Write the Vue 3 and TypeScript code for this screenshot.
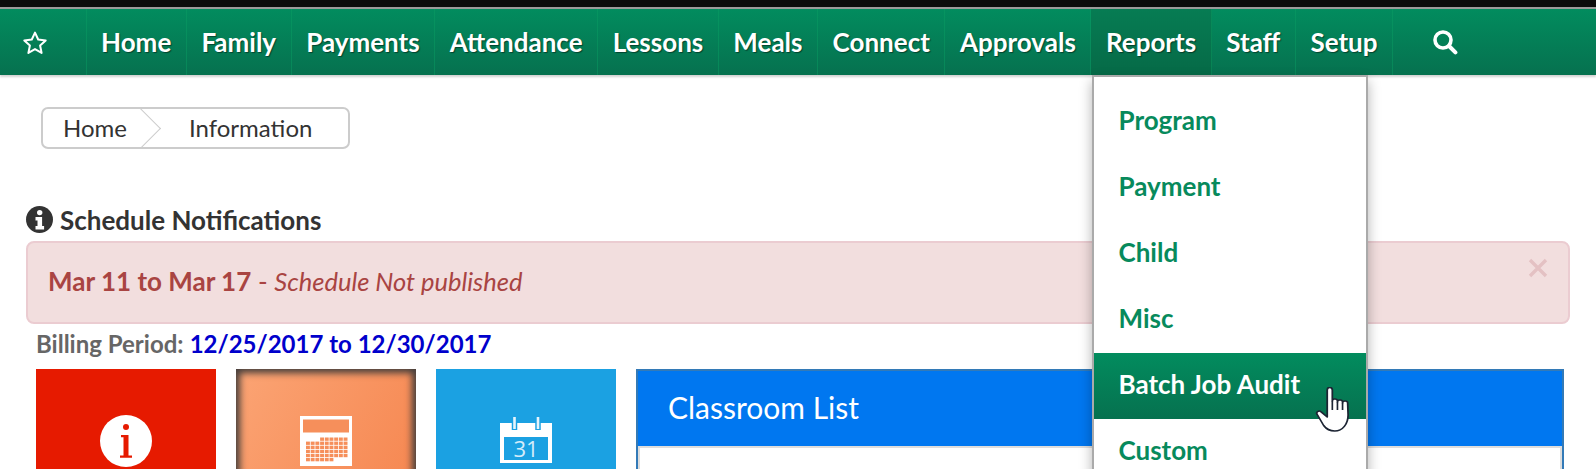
<script setup lang="ts">
const navItems: string[] = ['Home', 'Family', 'Payments', 'Attendance', 'Lessons', 'Meals', 'Connect', 'Approvals', 'Reports', 'Staff', 'Setup']
const menuItems: string[] = ['Program', 'Payment', 'Child', 'Misc', 'Batch Job Audit', 'Custom']
const gridCells: { x: number; y: number }[] = []
for (let r = 0; r < 6; r++) {
  for (let c = 0; c < 9; c++) {
    if ((r < 1 && c < 3) || (r > 4 && c > 5)) continue
    gridCells.push({ x: 6 + c * 4.7, y: 21.5 + r * 4.1 })
  }
}
</script>

<template>
  <div class="page">
    <div class="topbar"></div>
    <nav class="nav">
      <a class="nav-item star-item">
        <svg width="26" height="25" viewBox="0 0 26 25"><path d="M13 2.600l3.200 6.900 7.500.9-5.600 5.100 1.500 7.400L13 19.100l-6.600 3.800 1.500-7.400-5.600-5.100 7.500-.9z" fill="none" stroke="#fff" stroke-width="2" stroke-linejoin="round"/></svg>
      </a>
      <a v-for="item in navItems" :key="item" class="nav-item" :class="{ active: item === 'Reports' }">{{ item }}</a>
      <a class="nav-item search-item">
        <svg width="26" height="26" viewBox="0 0 26 26"><circle cx="11" cy="11" r="8" fill="none" stroke="#fff" stroke-width="3.600"/><path d="M17 17l6.400 6.400" stroke="#fff" stroke-width="4" stroke-linecap="round"/></svg>
      </a>
    </nav>

    <main class="content">
      <div class="crumbs">
        <span class="crumb first">Home<i class="chevron"></i></span>
        <span class="crumb second">Information</span>
      </div>

      <h4 class="section-title">
        <svg width="27" height="27" viewBox="0 0 27 27"><circle cx="13.500" cy="13.500" r="13.500" fill="#333"/><circle cx="13.700" cy="6.600" r="2.700" fill="#fff"/><path d="M9.500 11h6.600v9h2v3.400H9.500V20h2v-5.600h-2z" fill="#fff"/></svg>
        <span>Schedule Notifications</span>
      </h4>

      <div class="alert">
        <span><b>Mar 11 to Mar 17</b> - <em>Schedule Not published</em></span>
        <svg class="close" width="20" height="20" viewBox="0 0 20 20"><path d="M2 2l16 16M18 2L2 18" stroke="#e4c1c3" stroke-width="3.400"/></svg>
      </div>

      <div class="billing"><b>Billing Period:</b> <b class="dates">12/25/2017 to 12/30/2017</b></div>

      <div class="dash">
        <div class="tile red">
          <svg width="52" height="52" viewBox="0 0 52 52"><circle cx="26" cy="26" r="26" fill="#fff"/><circle cx="26" cy="12" r="3" fill="#e61a00"/><path d="M21 20h7.500v20.500h3.500v2.200H20v-2.200h3.500V22.200H21z" fill="#e61a00"/></svg>
        </div>
        <div class="tile orange">
          <svg width="52" height="50" viewBox="0 0 52 50">
            <rect width="52" height="50" fill="#fff"/>
            <rect x="3" y="3.500" width="46" height="13" fill="#f68f5b"/>
            <rect v-for="(c, i) in gridCells" :key="i" :x="c.x" :y="c.y" width="3.900" height="3.300" fill="#f68f5b"/>
          </svg>
        </div>
        <div class="tile blue">
          <svg width="52" height="46" viewBox="0 0 52 46">
            <path d="M0 6h52v40H0z" fill="#fff"/>
            <rect x="4" y="20" width="44" height="23" fill="#1ba1e2"/>
            <path d="M14.500 0v13M38 0v13" stroke="#1ba1e2" stroke-width="5.500"/>
            <path d="M14.500 0v12M38 0v12" stroke="#e6f4fc" stroke-width="2.600"/>
            <text x="26" y="40" text-anchor="middle" class="cal-num">31</text>
          </svg>
        </div>
        <section class="panel">
          <header class="panel-head">Classroom List</header>
          <div class="panel-body"></div>
        </section>
      </div>
    </main>

    <ul class="menu">
      <li v-for="m in menuItems" :key="m" :class="{ hover: m === 'Batch Job Audit' }">{{ m }}</li>
    </ul>

    <svg class="cursor" width="40" height="46" viewBox="0 0 36 46" preserveAspectRatio="none">
      <path d="M11 3c0-3.500 4.600-3.500 4.600 0V14c0-2.600 4.600-2.600 4.600 0v1c0-2.600 4.600-2.600 4.600 0v1c0-2.600 4.600-2.600 4.600 0l.4 12c0 9-5 16-12 16-5 0-8-2.500-10-5.500L2 27.500c-1.600-2.500 1.500-4.500 3.500-2.700L11 30z" fill="#fff" stroke="#1c2433" stroke-width="1.600" stroke-linejoin="round"/>
      <path d="M15.600 14v9M20.200 15v8M24.800 16v7" stroke="#1c2433" stroke-width="1.500" fill="none"/>
    </svg>
  </div>
</template>

<style scoped>
.page {
  position: relative;
  width: 1596px;
  height: 469px;
  overflow: hidden;
  background: #fff;
  font-family: Lato, "Open Sans", sans-serif;
  color: #333;
}
.topbar {
  height: 7px;
  background: #0b0b0b;
  border-bottom: 2px solid #9c9a9a;
}
.nav {
  display: flex;
  height: 66px;
  background: linear-gradient(#028c5e, #06714f);
  box-shadow: 0 2px 2px rgba(0, 0, 0, 0.18);
  position: relative;
}
.nav-item {
  display: flex;
  align-items: center;
  padding: 0 14.550px;
  color: #fff;
  font-size: 26px;
  font-weight: 700;
  text-shadow: 1px 1px 1px rgba(0, 0, 0, 0.45);
  border-right: 1px solid rgba(10, 160, 100, 0.45);
  white-space: nowrap;
}
.star-item {
  width: 86.500px;
  box-sizing: border-box;
  padding: 0 0 0 22px;
}
.search-item {
  border-right: 0;
  padding: 0 0 0 38.500px;
}
.active {
  background: linear-gradient(#067c53, #066a47);
}
.content {
  padding: 32px 26px 0;
}
.crumbs {
  display: flex;
  width: 309px;
  height: 42px;
  box-sizing: border-box;
  margin-left: 15px;
  border: 2px solid #ccc;
  border-radius: 7px;
  font-size: 24px;
  line-height: 38px;
  color: #333;
}
.crumb {
  position: relative;
}
.first {
  width: 97px;
  padding-left: 20px;
  box-sizing: border-box;
}
.chevron {
  position: absolute;
  top: 4.500px;
  right: -14.500px;
  width: 29px;
  height: 29px;
  border-top: 1px solid #ccc;
  border-right: 1px solid #ccc;
  transform: rotate(45deg);
  box-sizing: border-box;
}
.second {
  padding-left: 49px;
}
.section-title {
  display: flex;
  align-items: center;
  gap: 7px;
  margin: 57px 0 0;
  height: 27px;
  font-size: 26px;
  font-weight: 700;
  color: #333;
}
.alert {
  display: flex;
  justify-content: space-between;
  box-sizing: border-box;
  height: 83px;
  margin-top: 8px;
  padding: 14px 20px;
  background: #f2dede;
  border: 2px solid #ebccd1;
  border-radius: 8px;
  color: #a94442;
  font-size: 26px;
  line-height: 48px;
}
.alert em {
  font-size: 25.500px;
}
.alert .close {
  margin-top: 1px;
}
.billing {
  margin: 6px 0 0 10px;
  height: 28px;
  line-height: 28px;
  font-size: 24px;
  color: #666;
}
.dates {
  color: #0000cc;
}
.dash {
  display: flex;
  gap: 20px;
  margin: 11px 6px 0 10px;
}
.tile {
  flex: 0 0 180px;
  height: 180px;
  box-sizing: border-box;
  padding-top: 46px;
  display: flex;
  justify-content: center;
  align-items: flex-start;
}
.red {
  background: #e61a00;
}
.orange {
  background: linear-gradient(120deg, #fba474, #f5834c);
  box-shadow: inset 0 0 7px 4px #453f3c;
  padding-top: 47px;
}
.blue {
  background: #1ba1e2;
  padding-top: 48px;
}
.cal-num {
  font-family: "Open Sans", sans-serif;
  font-size: 22px;
  fill: #d5ecfa;
}
.panel {
  flex: 1;
  box-sizing: border-box;
  border: 2px solid #337ab7;
  height: 200px;
}
.panel-head {
  height: 75px;
  box-sizing: border-box;
  padding: 0 30px;
  background: #0077f0;
  color: #fff;
  font-size: 30px;
  line-height: 72px;
}
.panel-body {
  height: 120px;
  border: 2px solid #ddd;
  background: #fff;
}
.menu {
  position: absolute;
  top: 75px;
  left: 1092px;
  width: 276px;
  box-sizing: border-box;
  margin: 0;
  padding: 12px 0 0;
  list-style: none;
  background: #fff;
  border: 2px solid #aaa;
  border-bottom: 0;
  box-shadow: 0 6px 12px rgba(0, 0, 0, 0.3);
}
.menu li {
  height: 66px;
  padding-left: 24.500px;
  line-height: 63px;
  color: #078a5c;
  font-size: 26px;
  font-weight: 700;
}
.menu li.hover {
  background: linear-gradient(#028c5e, #06714f);
  color: #fff;
}
.cursor {
  position: absolute;
  left: 1315px;
  top: 387px;
}
</style>

<style>
html, body { margin: 0; background: #fff; }
</style>
